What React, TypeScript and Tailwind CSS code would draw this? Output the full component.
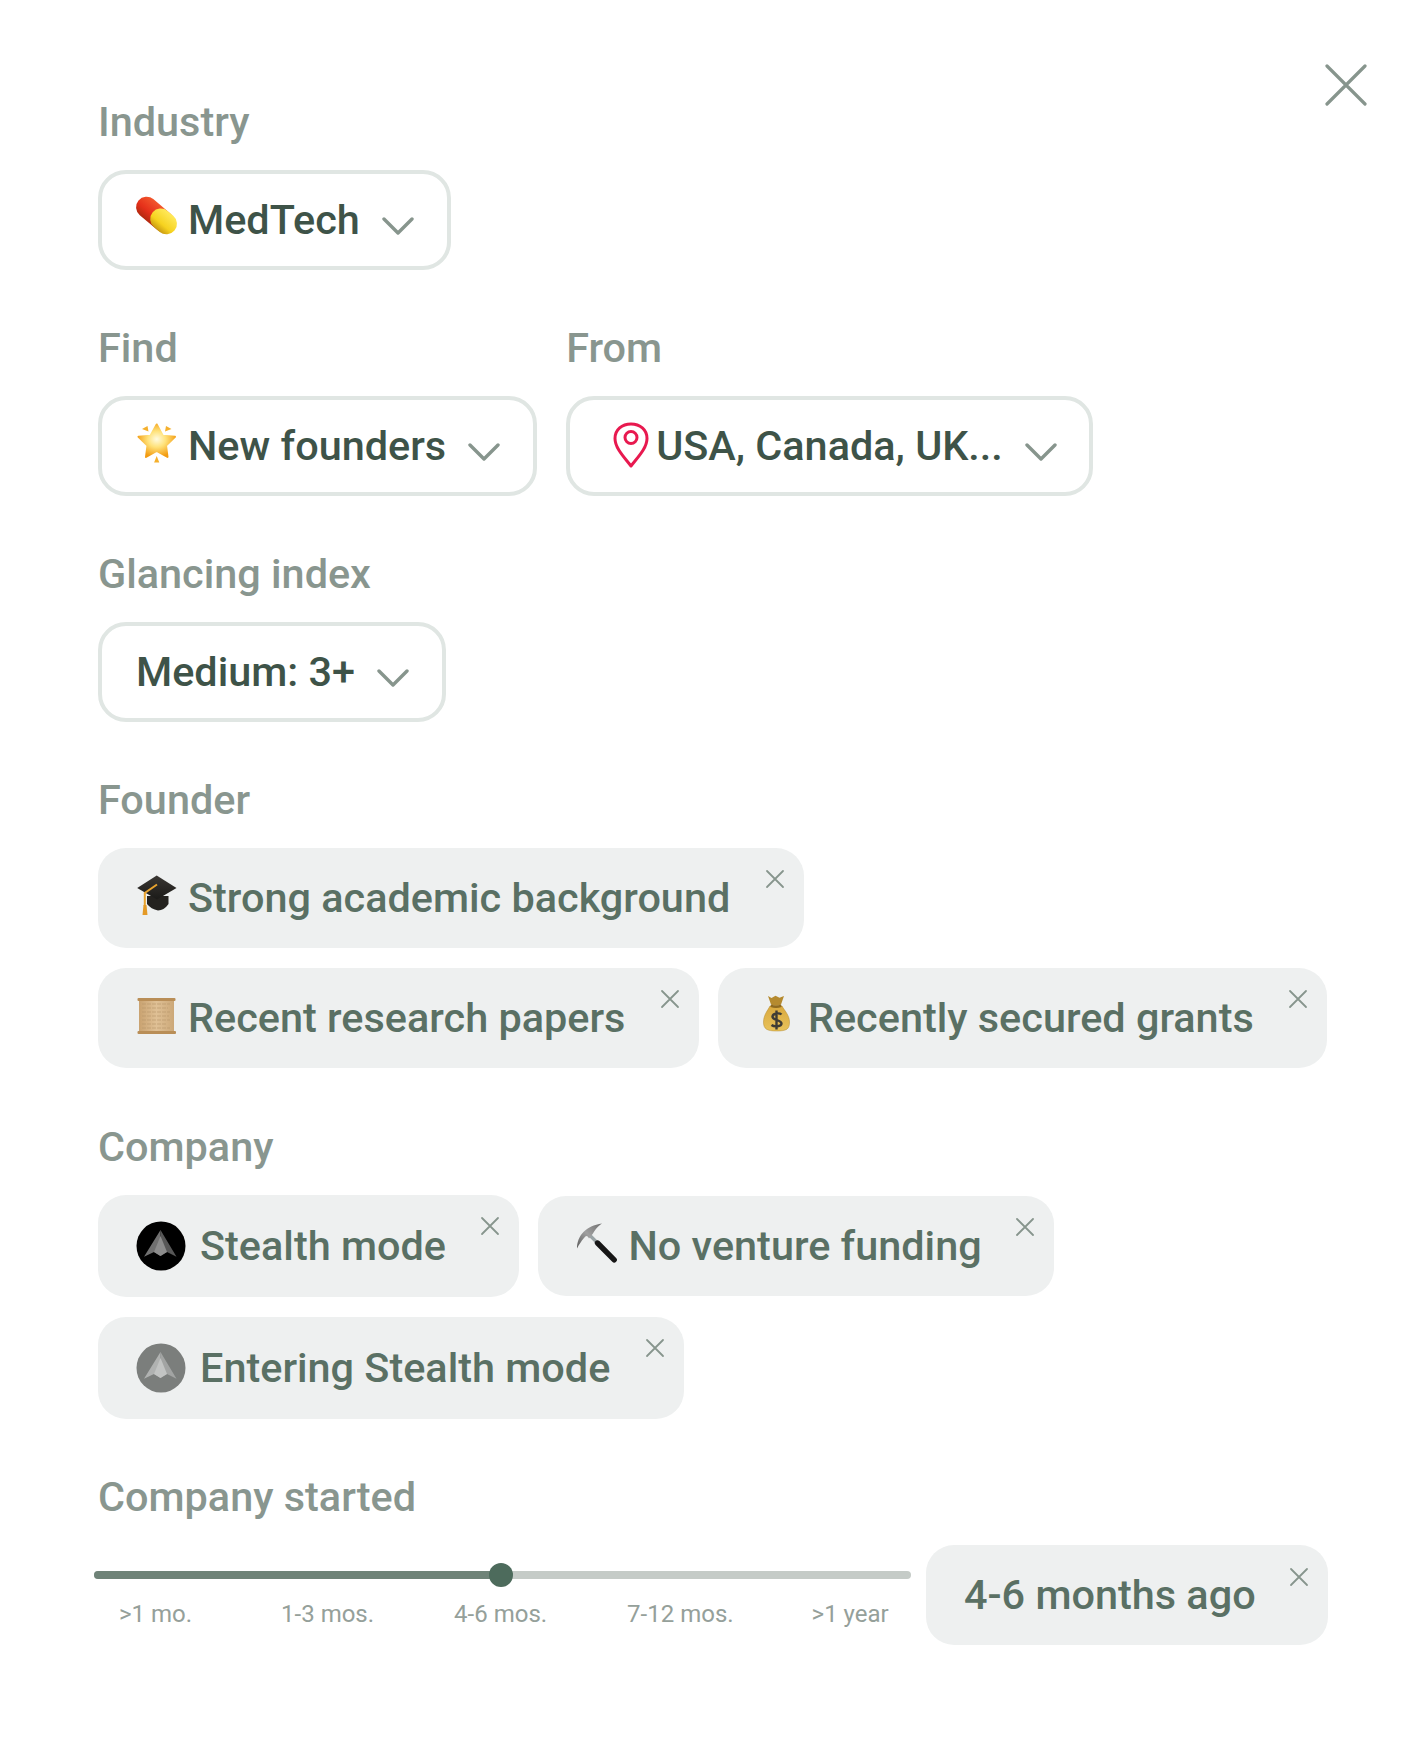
import React from "react";

const X = ({ className = "" }: { className?: string }) => (
  <svg viewBox="0 0 20 20" className={className} fill="none" stroke="#87958d" strokeWidth="1.8" strokeLinecap="round">
    <path d="M2 2 L18 18 M18 2 L2 18" />
  </svg>
);

const Chevron = () => (
  <svg viewBox="0 0 32 18" className="w-8 h-[18px] mt-[12px] shrink-0" fill="none" stroke="#87958d" strokeWidth="3.4" strokeLinecap="round" strokeLinejoin="round">
    <path d="M2 2 L16 16 L30 2" />
  </svg>
);

const Box = ({ children }: { children: React.ReactNode }) => (
  <svg viewBox="0 0 40 40" className="w-10 h-10 shrink-0 mb-[7px] overflow-visible">{children}</svg>
);

const PillIcon = () => (
  <Box>
    <defs>
      <linearGradient id="pr" x1="0" y1="0" x2="0" y2="1">
        <stop offset="0" stopColor="#f2572c" />
        <stop offset="0.6" stopColor="#e5301a" />
        <stop offset="1" stopColor="#b32a10" />
      </linearGradient>
      <linearGradient id="py" x1="0" y1="0" x2="0" y2="1">
        <stop offset="0" stopColor="#ffe95a" />
        <stop offset="0.65" stopColor="#f6d21f" />
        <stop offset="1" stopColor="#c99a12" />
      </linearGradient>
    </defs>
    <g transform="translate(20.5 18.5) rotate(40)">
      <rect x="-23.5" y="-10.5" width="44" height="21" rx="10.5" fill="url(#pr)" />
      <rect x="-5" y="-10.5" width="28.5" height="21" rx="10.5" fill="url(#py)" />
    </g>
  </Box>
);

const StarIcon = () => (
  <Box>
    <defs>
      <radialGradient id="st" cx="0.5" cy="0.45" r="0.55">
        <stop offset="0" stopColor="#fffbe0" />
        <stop offset="0.45" stopColor="#ffe27a" />
        <stop offset="1" stopColor="#f39c12" />
      </radialGradient>
    </defs>
    <path d="M20.7 1.5 L26.8 12.8 L39 13.8 L30 22.5 L31.5 34 L20.7 28 L10 34 L11.5 22.5 L2.5 13.8 L14.5 12.8 Z" fill="url(#st)" stroke="url(#st)" strokeWidth="2" strokeLinejoin="round" />
    <path d="M6 6 L11.5 3 L12.5 8.5 Z M30 3 L35.5 6 L29 8.5 Z M20.7 33 L23.3 39.5 L18.1 39.5 Z" fill="#f5b02c" />
  </Box>
);

const CapIcon = () => (
  <Box>
    <defs>
      <linearGradient id="cb" x1="0" y1="0" x2="0" y2="1">
        <stop offset="0" stopColor="#3a3733" />
        <stop offset="1" stopColor="#1b1a18" />
      </linearGradient>
    </defs>
    <path d="M11 21 L32.5 21 L32.5 29 Q28 35.5 22 35.5 Q15 34 11 29 Z" fill="#24221f" />
    <path d="M20.7 0.5 L40.5 13 L21 24.5 L1.2 13 Z" fill="url(#cb)" strokeLinejoin="round" />
    <path d="M21 9.5 L8.8 18 L8.8 31" fill="none" stroke="#e8a32e" strokeWidth="2" />
    <path d="M7.5 30 L10.5 30 L11.5 40 L6.5 40 Z" fill="#e49a26" />
  </Box>
);

const ScrollIcon = () => (
  <Box>
    <defs>
      <linearGradient id="sc" x1="0" y1="0" x2="1" y2="0">
        <stop offset="0" stopColor="#c9a270" />
        <stop offset="0.5" stopColor="#dfc095" />
        <stop offset="1" stopColor="#cca878" />
      </linearGradient>
    </defs>
    <rect x="3" y="3" width="35" height="35" fill="url(#sc)" />
    <path d="M6 9 H34 M6 13 H32 M6 17 H34 M6 21 H33 M6 25 H34 M6 29 H31 M6 33 H34" stroke="#b5946a" strokeWidth="0.6" strokeDasharray="4 1" />
    <rect x="1.5" y="3" width="38" height="3" rx="1" fill="#b98e57" />
    <rect x="1.5" y="36" width="38.5" height="3" rx="1" fill="#b98e57" />
  </Box>
);

const BagIcon = () => (
  <Box>
    <defs>
      <linearGradient id="bg" x1="0" y1="0" x2="0" y2="1">
        <stop offset="0" stopColor="#d9a93f" />
        <stop offset="1" stopColor="#e8c25a" />
      </linearGradient>
    </defs>
    <path d="M14 11 C12 15 7.5 20 7.5 27 C7.5 34 11 36 20.5 36 C31 36 33.5 34 33.5 27 C33.5 20 28 15 26 11 Z" fill="url(#bg)" stroke="#b58a2c" strokeWidth="0.5" />
    <path d="M12 1 L15.5 3 L19.5 0.8 L23.5 2.8 L28 1 L25 9.5 Q20 12 15 9.5 Z" fill="#b58a2f" />
    <path d="M15 9.5 Q20 11.5 25 9.5 L25.5 12 Q20 14 14.5 12 Z" fill="#8f6a20" />
    <path d="M25.5 19.5 C24 18 17 17.5 16.5 21.5 C16 25.5 25.5 24.5 25.5 28.5 C25.5 32 18 32 15.5 30 M20.5 15.5 V34.5" fill="none" stroke="#3f3c35" strokeWidth="2.4" />
  </Box>
);

const PickIcon = () => (
  <Box>
    <defs>
      <linearGradient id="ph" x1="0" y1="1" x2="1" y2="0">
        <stop offset="0" stopColor="#5a5a5a" />
        <stop offset="0.5" stopColor="#a0a0a0" />
        <stop offset="1" stopColor="#6f6f6f" />
      </linearGradient>
    </defs>
    <path d="M13 11.5 L23 21.5" stroke="#9aa4a6" strokeWidth="3.2" />
    <path d="M21.5 20 L38.2 36.8" stroke="#161616" strokeWidth="5.4" strokeLinecap="round" />
    <path d="M1 25.5 C1 13 10 2.5 26 0.5 C21 4 19 7 17 10.5 L13 15.5 C11 12 10 12.5 8 15 C5.5 18 3 21.5 1 25.5 Z" fill="url(#ph)" />
  </Box>
);

const Stealth = ({ dim }: { dim?: boolean }) => (
  <svg viewBox="0 0 50 50" className="w-[50px] h-[50px] shrink-0">
    <circle cx="25" cy="25" r="24.5" fill={dim ? "#7b7e7c" : "#000000"} />
    <path d="M24.5 9 L8 35.7 L18 31 L24.5 35 L24.5 9 Z" fill={dim ? "#b0b2b1" : "#707070"} />
    <path d="M24.5 9 L40.5 35.7 L31 31 L24.5 35 L24.5 9 Z" fill={dim ? "#a2a4a3" : "#575757"} />
    <path d="M24.5 15 L31 31 L24.5 35 L18 31 Z" fill={dim ? "#c2c4c3" : "#8c8c8c"} />
  </svg>
);

const Pin = () => (
  <svg viewBox="0 0 36 46" className="w-9 h-[46px] shrink-0 mr-[7px] mb-[2px]" fill="none" stroke="#e8194f" strokeWidth="3">
    <path d="M18 44 C11 35 2 26 2 16.5 C2 7.5 9 2 18 2 C27 2 34 7.5 34 16.5 C34 26 25 35 18 44 Z" strokeLinejoin="round" />
    <circle cx="18" cy="15.5" r="6" />
  </svg>
);

const Label = ({ children }: { children: React.ReactNode }) => (
  <div className="h-12 mb-6 text-[41.4px] leading-[48px] font-medium text-[#89968f]">{children}</div>
);

const Select = ({ children, icon }: { children: React.ReactNode; icon?: React.ReactNode }) => (
  <div className="inline-flex items-center h-[100px] rounded-[28px] border-4 border-[#e0e6e3] pl-[34px] pr-[33px] text-[41.4px] font-medium text-[#3e5348]">
    {icon}
    <span className={icon ? "ml-[12px] mr-[22px] whitespace-nowrap" : "mr-[22px] whitespace-nowrap"}>{children}</span>
    <Chevron />
  </div>
);

const Chip = ({ children, icon, h = "h-[100px]", xTop = "top-[21px]", gap = "ml-[12px]", pr = "pr-[73.5px]" }: { children: React.ReactNode; icon: React.ReactNode; h?: string; xTop?: string; gap?: string; pr?: string }) => (
  <div className={`relative inline-flex items-center rounded-[28px] bg-[#eef0f0] pl-[38px] text-[41.4px] font-medium text-[#5a7064] ${h} ${pr}`}>
    {icon}
    <span className={`${gap} whitespace-nowrap`}>{children}</span>
    <X className={`absolute right-[19px] w-5 h-5 ${xTop}`} />
  </div>
);

export default function App() {
  return (
    <div className="relative w-[1426px] h-[1748px] bg-white pt-[98px] pl-[98px] font-['Roboto',sans-serif]">
      <svg viewBox="0 0 42 42" className="absolute left-[1325px] top-[64px] w-[42px] h-[42px]" fill="none" stroke="#87958d" strokeWidth="3.2" strokeLinecap="round">
        <path d="M2 2 L40 40 M40 2 L2 40" />
      </svg>

      <div className="flex flex-col gap-[54px]">
        <section>
          <Label>Industry</Label>
          <Select icon={<PillIcon />}>MedTech</Select>
        </section>

        <div className="flex gap-[29px]">
          <section>
            <Label>Find</Label>
            <Select icon={<StarIcon />}>New founders</Select>
          </section>
          <section>
            <Label>From</Label>
            <div className="inline-flex items-center h-[100px] rounded-[28px] border-4 border-[#e0e6e3] pl-[43px] pr-[32px] text-[41.4px] font-medium text-[#3e5348]">
              <Pin />
              <span className="mr-[22px] whitespace-nowrap">USA, Canada, UK...</span>
              <Chevron />
            </div>
          </section>
        </div>

        <section>
          <Label>Glancing index</Label>
          <Select>Medium: 3+</Select>
        </section>

        <section>
          <Label>Founder</Label>
          <div className="flex flex-col gap-5 items-start">
            <Chip icon={<CapIcon />}>Strong academic background</Chip>
            <div className="flex gap-[19px]">
              <Chip icon={<ScrollIcon />}>Recent research papers</Chip>
              <Chip icon={<BagIcon />}>Recently secured grants</Chip>
            </div>
          </div>
        </section>

        <section className="mt-px">
          <Label>Company</Label>
          <div className="flex flex-col gap-5 items-start">
            <div className="flex gap-[19px] items-center">
              <Chip icon={<Stealth />} h="h-[102px]" gap="ml-[14px]">Stealth mode</Chip>
              <Chip icon={<PickIcon />} pr="pr-[72px]">No venture funding</Chip>
            </div>
            <Chip icon={<Stealth dim />} h="h-[102px]" gap="ml-[14px]">Entering Stealth mode</Chip>
          </div>
        </section>

        <section>
          <Label>Company started</Label>
          <div className="flex items-start -ml-1">
            <div className="w-[820px] mr-[12px] pt-[26px]">
              <div className="relative h-2 w-[817px] rounded-full bg-[#c5cbc7]">
                <div className="h-2 w-[407px] rounded-full bg-[#6f8378]" />
                <div className="absolute left-[395px] top-[-8px] w-6 h-6 rounded-full bg-[#4d6b5c]" />
              </div>
              <div className="flex mt-[21px] pl-[25px] gap-[80px] text-2xl leading-7 text-[#95a09a] whitespace-nowrap">
                <span className="mr-[9px]">&gt;1 mo.</span>
                <span>1-3 mos.</span>
                <span>4-6 mos.</span>
                <span>7-12 mos.</span>
                <span className="-ml-[2px]">&gt;1 year</span>
              </div>
            </div>
            <Chip icon={null} gap="" xTop="top-[22px]" pr="pr-[72px]">4-6 months ago</Chip>
          </div>
        </section>
      </div>
    </div>
  );
}
